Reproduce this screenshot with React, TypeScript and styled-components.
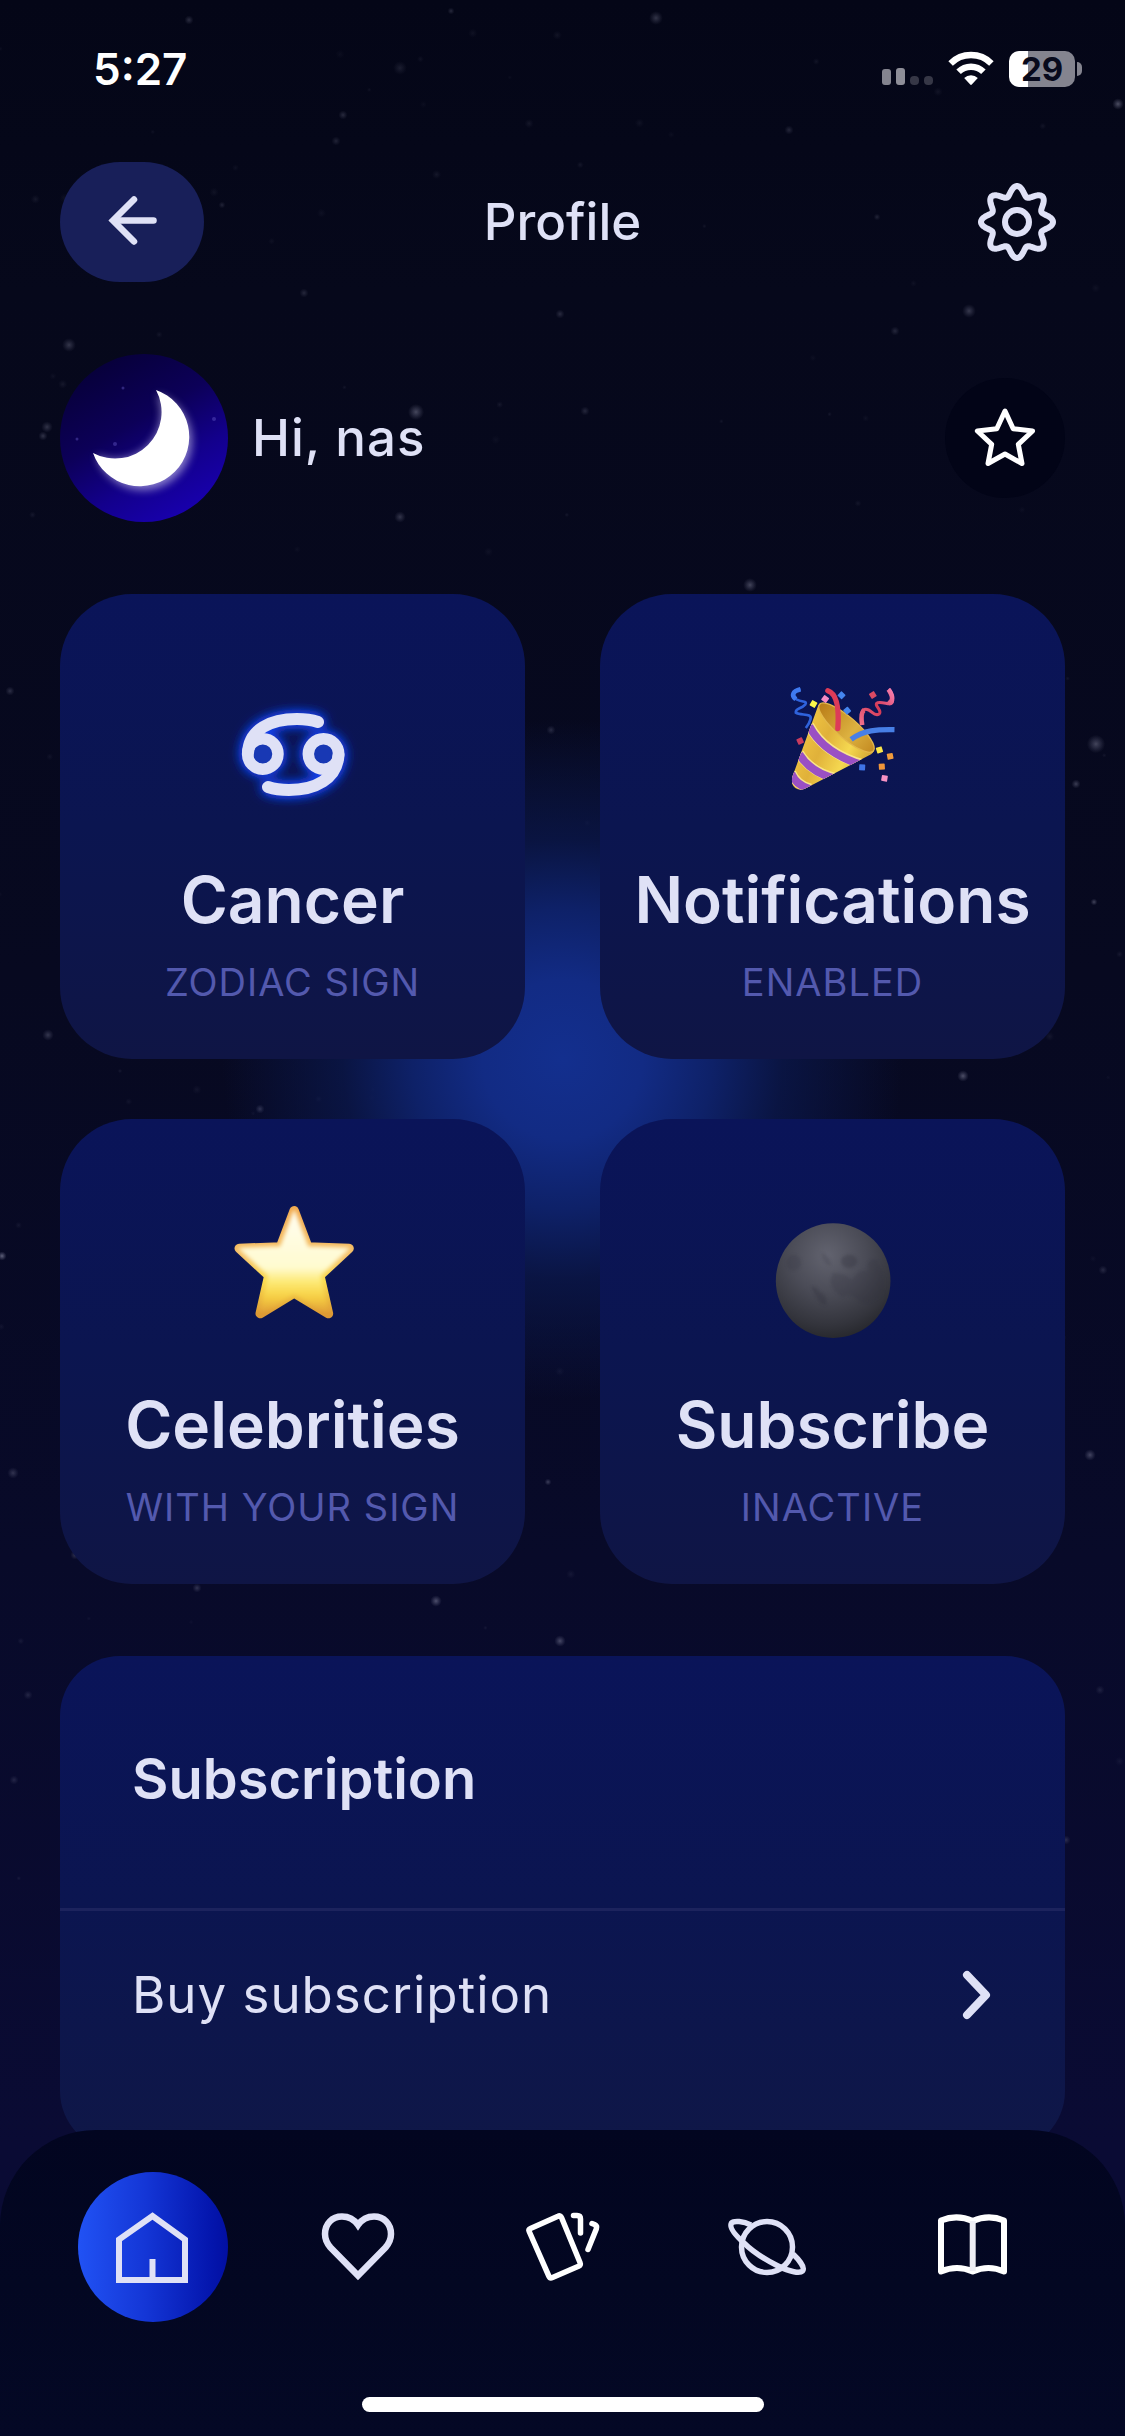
import React from "react";
import styled, { createGlobalStyle } from "styled-components";

const color = {
  text: "#dfe1f6",
  muted: "#5359ae",
  night: "#050718",
};

const GlobalStyle = createGlobalStyle`
  *, *::before, *::after { box-sizing: border-box; }
  body {
    margin: 0;
    background: ${color.night};
    color: ${color.text};
    font-family: Inter, "Liberation Sans", sans-serif;
  }
  button {
    border: 0;
    padding: 0;
    background: none;
    color: inherit;
    font: inherit;
    cursor: pointer;
  }
  h1, h2, p { margin: 0; }
  svg { display: block; }
`;

const Page = styled.div`
  position: relative;
  min-height: 100vh;
  overflow: hidden;
  background: linear-gradient(180deg, #040617 0%, #06081b 12%, #070920 40%, #080a29 64%, #0a0b34 88%);
`;

const Sky = styled.svg`
  position: absolute;
  inset: 0;
  width: 100%;
  height: 100%;
`;

const StatusBar = styled.div`
  position: relative;
  display: flex;
  justify-content: space-between;
  align-items: center;
  height: 138px;
  padding: 0 43px 0 93px;
`;

const Clock = styled.time`
  color: #fff;
  font-size: 44px;
  line-height: 54px;
  font-weight: 600;
`;

const StatusIcons = styled.div`
  display: flex;
  align-items: center;
  gap: 15px;
`;

const Battery = styled.div`
  display: flex;
  align-items: center;
  gap: 2px;
`;

const BatteryBody = styled.div<{ $level: number }>`
  width: 66px;
  height: 36px;
  border-radius: 10px;
  background: linear-gradient(90deg, #fff ${(p) => p.$level}%, #84848f ${(p) => p.$level}%);
  color: #080a1c;
  font-size: 33px;
  line-height: 36px;
  font-weight: 700;
  text-align: center;
`;

const BatteryNub = styled.div`
  width: 5px;
  height: 14px;
  border-radius: 0 6px 6px 0;
  background: #84848f;
`;

const Main = styled.main`
  position: relative;
  display: flex;
  flex-direction: column;
  gap: 72px;
  padding: 24px 60px 285px;
`;

const Header = styled.header`
  display: grid;
  grid-template-columns: 144px 1fr 144px;
  align-items: center;
`;

const Title = styled.h1`
  font-size: 51px;
  line-height: 60px;
  font-weight: 500;
  text-align: center;
`;

const BackButton = styled.button`
  display: grid;
  place-items: center;
  height: 120px;
  border-radius: 60px;
  background: #181f59;
`;

const SettingsButton = styled.button`
  justify-self: end;
`;

const Profile = styled.section`
  display: flex;
  align-items: center;
  gap: 24px;
`;

const Avatar = styled.div`
  width: 168px;
  height: 168px;
  border-radius: 50%;
  overflow: hidden;
  background: linear-gradient(150deg, #07003a 12%, #0c0058 42%, #13008c 66%, #1900b4 92%);
`;

const Greeting = styled.p`
  flex: 1;
  font-size: 51px;
  line-height: 60px;
  font-weight: 500;
  letter-spacing: 1px;
`;

const FavouriteButton = styled.button`
  display: grid;
  place-items: center;
  width: 120px;
  height: 120px;
  border-radius: 50%;
  background: #020417;
`;

const Tiles = styled.section`
  display: grid;
  grid-template-columns: 1fr 1fr;
  gap: 60px 75px;
  background: radial-gradient(circle at 50% 47%, #132f8e 0, #122b84 80px, #0e2168 150px, rgba(11, 25, 80, 0.7) 220px, rgba(9, 18, 60, 0) 340px);
`;

const Tile = styled.button`
  display: flex;
  flex-direction: column;
  align-items: center;
  aspect-ratio: 1;
  padding-top: 72px;
  border-radius: 72px;
  background: linear-gradient(180deg, #0a1459 0%, #0b1550 50%, #0f1545 100%);
`;

const TileTitle = styled.span`
  margin-top: 52px;
  font-size: 64px;
  line-height: 76px;
  font-weight: 600;
`;

const TileLabel = styled.span`
  margin-top: 20px;
  color: ${color.muted};
  font-size: 38px;
  line-height: 48px;
  letter-spacing: 1px;
  text-transform: uppercase;
`;

const Panel = styled.section`
  padding-bottom: 72px;
  border-radius: 60px;
  background: linear-gradient(180deg, #0a1459 0%, #0b1550 50%, #0f1747 100%);
`;

const PanelTitle = styled.h2`
  padding: 88px 72px 94px;
  border-bottom: 3px solid #1c235d;
  font-size: 56px;
  line-height: 70px;
  font-weight: 600;
`;

const PanelRow = styled.button`
  display: flex;
  justify-content: space-between;
  align-items: center;
  width: 100%;
  height: 168px;
  padding: 0 72px;
  font-size: 51px;
  line-height: 60px;
  letter-spacing: 1px;
`;

const BottomBar = styled.footer`
  position: fixed;
  left: 0;
  right: 0;
  bottom: 0;
  display: flex;
  flex-direction: column;
  align-items: center;
  gap: 75px;
  padding: 42px 78px 24px;
  border-radius: 96px 96px 0 0;
  background: linear-gradient(180deg, #020520 0%, #030722 50%, #040825 100%);
`;

const NavList = styled.nav`
  display: flex;
  justify-content: space-between;
  width: 100%;
`;

const NavLink = styled.a<{ $active?: boolean }>`
  display: grid;
  place-items: center;
  width: 150px;
  height: 150px;
  border-radius: 50%;
  background: ${(p) =>
    p.$active ? "linear-gradient(90deg, #2152f4 0%, #1436d6 45%, #0416ae 88%, #020fa2 100%)" : "none"};
`;

const HomeIndicator = styled.div`
  width: 402px;
  height: 15px;
  border-radius: 8px;
  background: #fff;
`;

/* x, y, radius, opacity of the stars that stand out */
const brightStars = [
  [189, 20, 4, 0.22], [656, 18, 6, 0.26], [400, 68, 6, 0.13], [1118, 104, 5, 0.4],
  [343, 115, 4, 0.2], [789, 130, 4, 0.18], [336, 141, 4, 0.16], [969, 311, 6, 0.28],
  [69, 345, 6, 0.26], [416, 412, 7, 0.36], [400, 517, 5, 0.26], [304, 293, 4, 0.18],
  [560, 314, 4, 0.2], [895, 331, 4, 0.18], [47, 427, 5, 0.24], [43, 436, 4, 0.24],
  [877, 217, 3, 0.16], [222, 205, 3, 0.16], [585, 411, 4, 0.18], [451, 11, 3, 0.2],
  [1096, 744, 8, 0.34], [1094, 902, 3, 0.34], [963, 1076, 5, 0.4], [1076, 784, 4, 0.3],
  [48, 1035, 5, 0.26], [260, 1109, 4, 0.28], [635, 1118, 7, 0.34], [1090, 1455, 5, 0.34],
  [436, 1601, 5, 0.4], [750, 585, 6, 0.34], [2, 1256, 4, 0.5], [548, 1482, 3, 0.3],
  [75, 1555, 4, 0.24], [197, 1588, 4, 0.24], [13, 1473, 5, 0.24], [10, 691, 4, 0.22],
  [551, 730, 4, 0.2], [1103, 1270, 4, 0.18], [560, 1641, 5, 0.36], [14, 1780, 4, 0.16],
  [28, 1695, 4, 0.16], [1066, 1840, 4, 0.2], [1100, 1690, 4, 0.14], [240, 795, 3, 0.2],
];

const dust = Array.from({ length: 170 }, (_, i) => {
  const a = Math.sin(i * 12.9898) * 43758.5453;
  const b = Math.sin(i * 78.233 + 4) * 24634.6345;
  const fx = a - Math.floor(a);
  const fy = b - Math.floor(b);
  return [fx * 1125, fy * 2000, 2 + ((i * 7) % 3), 0.04 + ((i * 3) % 5) * 0.012];
});

function NightSky() {
  return (
    <Sky viewBox="0 0 1125 2436" preserveAspectRatio="xMidYMin slice" aria-hidden="true">
      <defs>
        <radialGradient id="starlight">
          <stop offset="0" stopColor="#b9bad2" />
          <stop offset="0.45" stopColor="#9a9bb8" stopOpacity="0.6" />
          <stop offset="1" stopColor="#80829c" stopOpacity="0" />
        </radialGradient>
      </defs>
      {[...dust, ...brightStars].map(([x, y, r, o], i) => (
        <circle key={i} cx={x} cy={y} r={r * 1.15} opacity={o} fill="url(#starlight)" />
      ))}
    </Sky>
  );
}

function SignalIcon() {
  return (
    <svg width="51" height="36" viewBox="0 0 51 36" aria-hidden="true">
      <rect x="0" y="18" width="9" height="16" rx="3" fill="#84848f" />
      <rect x="14" y="17" width="9" height="17" rx="3" fill="#8e8e98" />
      <rect x="28" y="25" width="9" height="9" rx="4" fill="#363746" />
      <rect x="42" y="25" width="9" height="9" rx="4" fill="#363746" />
    </svg>
  );
}

function WifiIcon() {
  return (
    <svg width="46" height="36" viewBox="0 0 46 36" aria-hidden="true">
      <g fill="none" stroke="#fff" strokeWidth="6.4">
        <path d="M2.6 12.4a29 29 0 0 1 40.8 0" />
        <path d="M10.6 20.8a17.6 17.6 0 0 1 24.8 0" />
      </g>
      <path d="M16.2 27a9.8 9.8 0 0 1 13.6 0l-6 6.6q-.8.8-1.6 0z" fill="#fff" />
    </svg>
  );
}

function ArrowIcon() {
  return (
    <svg width="60" height="60" viewBox="0 0 60 60" fill="none" stroke={color.text} strokeWidth="6.5" strokeLinecap="round" aria-hidden="true">
      <path d="M32 7.500L11 28.500L32 49.500" />
      <path d="M13 28.500H51.500" />
    </svg>
  );
}

const gearPath =
  Array.from({ length: 192 }, (_, i) => {
    const t = (i / 192) * Math.PI * 2;
    const r = 31.2 + 4.8 * Math.cos(8 * t);
    return `${i ? "L" : "M"}${(48 + r * Math.sin(t)).toFixed(2)} ${(48 - r * Math.cos(t)).toFixed(2)}`;
  }).join("") + "Z";

function GearIcon() {
  return (
    <svg width="96" height="96" viewBox="0 0 96 96" fill="none" stroke={color.text} strokeWidth="6" strokeLinejoin="round" aria-hidden="true">
      <path d={gearPath} />
      <circle cx="48" cy="48" r="12" />
    </svg>
  );
}

function AvatarMoon() {
  return (
    <svg width="168" height="168" viewBox="0 0 168 168" aria-hidden="true">
      <defs>
        <filter id="moonGlow" x="-30%" y="-30%" width="160%" height="160%">
          <feGaussianBlur stdDeviation="4" />
        </filter>
      </defs>
      <path d="M97 40A49 49 0 1 1 36 101A46 46 0 0 0 97 40Z" fill="#c9c2ea" opacity=".65" filter="url(#moonGlow)" />
      <path d="M96 36A49.500 49.500 0 1 1 33 99A46.500 46.500 0 0 0 96 36Z" fill="#fff" />
      <g fill="#6d5fd0" opacity=".4">
        <circle cx="63" cy="34" r="1.500" />
        <circle cx="55" cy="90" r="2" />
        <circle cx="154" cy="65" r="2" />
        <circle cx="17" cy="85" r="1.500" />
      </g>
    </svg>
  );
}

function OutlineStar() {
  const points = Array.from({ length: 10 }, (_, i) => {
    const r = i % 2 ? 14 : 29;
    const t = (i * Math.PI) / 5;
    return `${(36 + r * Math.sin(t)).toFixed(1)},${(38 - r * Math.cos(t)).toFixed(1)}`;
  }).join(" ");
  return (
    <svg width="72" height="72" viewBox="0 0 72 72" fill="none" stroke="#fff" strokeWidth="5" strokeLinejoin="round" aria-hidden="true">
      <polygon points={points} />
    </svg>
  );
}

const TileIcon = styled.svg.attrs({ width: 144, height: 144, viewBox: "0 0 144 144", "aria-hidden": true })`
  overflow: visible;
`;

function CancerIcon() {
  return (
    <TileIcon>
      <defs>
        <filter id="signGlow" x="-40%" y="-40%" width="180%" height="180%">
          <feGaussianBlur stdDeviation="6" />
        </filter>
        <g id="cancerSign" fill="none" strokeLinecap="round">
          <g strokeWidth="11.5">
            <circle cx="41.800" cy="88" r="15.200" />
            <circle cx="102.500" cy="88" r="15.200" />
          </g>
          <g strokeWidth="12">
            <path d="M27 87C28 63 50 53 76 53C84 53 91 54 97 56" />
            <path d="M117.500 89C116 113 94 124 68 124C60 124 53 123 47 121" />
          </g>
        </g>
      </defs>
      <use href="#cancerSign" stroke="#1747ff" filter="url(#signGlow)" />
      <use href="#cancerSign" stroke="#1440ea" filter="url(#signGlow)" />
      <circle cx="41.800" cy="88" r="12" fill="#1838b4" />
      <circle cx="102.500" cy="88" r="12" fill="#1838b4" />
      <use href="#cancerSign" stroke={color.text} />
    </TileIcon>
  );
}

const confetti: [number, number, string][] = [
  [159, 102, "#fbf84a"], [194, 87, "#f58ac4"], [243, 76, "#4585ee"], [260, 122, "#4585ee"],
  [337, 75, "#dc4a64"], [119, 213, "#c93b5e"], [357, 240, "#fbe74a"], [389, 259, "#f09c3c"],
  [364, 290, "#f0963a"], [305, 292, "#3f74e6"], [372, 325, "#f792c4"],
];

function PartyIcon() {
  return (
    <TileIcon>
      <defs>
        <linearGradient id="cone" x1="0" y1=".4" x2="1" y2=".9">
          <stop offset="0" stopColor="#f6cc45" />
          <stop offset=".35" stopColor="#e0b13a" />
          <stop offset=".6" stopColor="#f5d850" />
          <stop offset="1" stopColor="#b9821d" />
        </linearGradient>
        <linearGradient id="mouth" x1="0" y1="0" x2="1" y2="0">
          <stop offset="0" stopColor="#b97c17" />
          <stop offset=".6" stopColor="#dcb140" />
          <stop offset="1" stopColor="#c48b22" />
        </linearGradient>
        <linearGradient id="redRibbon" x1="0" y1="1" x2="1" y2="0">
          <stop offset="0" stopColor="#f0708c" />
          <stop offset=".5" stopColor="#d53a56" />
          <stop offset="1" stopColor="#f77fb0" />
        </linearGradient>
        <clipPath id="coneShape">
          <path d="M174 104L95 322Q90 350 112 358Q124 362 136 355L326 256Q344 246 338 238Q300 232 250 196Q190 150 174 104Z" />
        </clipPath>
      </defs>
      <g transform="translate(-.5 4) scale(.3333)">
        <g clipPath="url(#coneShape)">
          <rect x="80" y="90" width="270" height="280" fill="url(#cone)" />
          <g fill="none" stroke="#f9e58a" strokeWidth="30">
            <path d="M146 166Q190 250 310 284" />
            <path d="M116 250Q150 306 225 324" />
            <path d="M92 308Q108 345 150 356" />
          </g>
          <g fill="none" stroke="#9a50c4" strokeWidth="24">
            <path d="M146 168Q190 252 310 286" />
            <path d="M116 252Q150 308 225 326" />
            <path d="M92 310Q108 347 150 358" />
          </g>
        </g>
        <ellipse cx="258" cy="173" rx="107" ry="31" transform="rotate(41 258 173)" fill="url(#mouth)" stroke="#e3b84a" strokeWidth="4" />
        <path d="M202 62C232 72 236 120 232 176" fill="none" stroke="#dd3b58" strokeWidth="16" strokeLinecap="round" />
        <path d="M272 208C310 180 350 178 402 179" fill="none" stroke="#477fe6" strokeWidth="16" />
        <path d="M120 58C96 64 90 78 108 88C128 98 142 92 134 104C122 118 104 114 106 128C120 138 156 128 150 148Q146 162 136 174" fill="none" stroke="#2f63dc" strokeWidth="8" />
        <path d="M120 58C96 64 92 76 106 88" fill="none" stroke="#3f7af0" strokeWidth="14" />
        <path d="M305 165C300 130 304 118 316 118C334 118 340 142 356 132C368 122 336 104 352 98C374 94 400 114 396 86Q394 64 384 58" fill="none" stroke="url(#redRibbon)" strokeWidth="9" />
        <path d="M305 165C301 140 302 126 311 120M384 58Q406 90 384 100" fill="none" stroke="url(#redRibbon)" strokeWidth="14" />
        {confetti.map(([x, y, fill], i) => (
          <rect key={i} x={x - 9} y={y - 9} width="18" height="18" rx="2" fill={fill} transform={`rotate(${30 + i * 7} ${x} ${y})`} />
        ))}
      </g>
    </TileIcon>
  );
}

const goldStar = "M251 62L292 171L416 175L328 257L354 371L251 309L149 371L175 257L86 175L210 171Z";

function GoldStarIcon() {
  return (
    <TileIcon>
      <defs>
        <linearGradient id="gold" x1="0" y1="0" x2="0" y2="1">
          <stop offset="0" stopColor="#f1a94c" />
          <stop offset=".45" stopColor="#f4c066" />
          <stop offset=".68" stopColor="#fbdc4c" />
          <stop offset="1" stopColor="#dd9a35" />
        </linearGradient>
        <linearGradient id="shine" x1="0" y1="0" x2="0" y2="1">
          <stop offset="0" stopColor="#fffdf0" />
          <stop offset=".55" stopColor="#fffbd0" />
          <stop offset=".68" stopColor="#fdeb7c" />
          <stop offset=".85" stopColor="#fbd843" stopOpacity=".6" />
          <stop offset="1" stopColor="#f3bd3a" stopOpacity="0" />
        </linearGradient>
        <filter id="soften">
          <feGaussianBlur stdDeviation="7" />
        </filter>
      </defs>
      <g transform="translate(-10.500 -1) scale(.3333)">
        <path d={goldStar} fill="url(#gold)" stroke="url(#gold)" strokeWidth="28" strokeLinejoin="round" />
        <path d={goldStar} fill="url(#shine)" stroke="url(#shine)" strokeWidth="4" strokeLinejoin="round" filter="url(#soften)" />
      </g>
    </TileIcon>
  );
}

function NewMoonIcon() {
  return (
    <TileIcon>
      <defs>
        <radialGradient id="moonBody" cx=".45" cy=".28" r=".75">
          <stop offset="0" stopColor="#62636f" />
          <stop offset=".45" stopColor="#4a4b56" />
          <stop offset=".8" stopColor="#34353d" />
          <stop offset="1" stopColor="#25262b" />
        </radialGradient>
        <filter id="craterBlur">
          <feGaussianBlur stdDeviation="5" />
        </filter>
      </defs>
      <g transform="translate(-10.500 9) scale(.3333)">
        <circle cx="248" cy="242" r="172" fill="url(#moonBody)" />
        <g fill="#2e2f3a" opacity=".32" filter="url(#craterBlur)">
          <path d="M182 258Q200 262 208 276Q234 286 226 316Q204 310 194 286Z" />
          <path d="M248 218Q290 222 304 240Q330 204 352 214Q346 170 378 180Q408 220 398 280Q350 330 310 290Q290 280 276 292Q240 270 240 240Z" opacity=".7" />
          <ellipse cx="296" cy="184" rx="24" ry="20" />
          <ellipse cx="130" cy="188" rx="22" ry="24" opacity=".6" />
          <path d="M212 160Q236 160 242 196Q220 200 212 160Z" opacity=".6" />
        </g>
      </g>
    </TileIcon>
  );
}

const NavIcon = styled.svg.attrs({ width: 96, height: 96, viewBox: "0 0 96 96", fill: "none", "aria-hidden": true })``;

const HomeIcon = () => (
  <NavIcon stroke={color.text} strokeWidth="6">
    <path d="M47.500 17L80 40.500V81H14V40.500ZM47.500 60V81" />
  </NavIcon>
);

const HeartIcon = () => (
  <NavIcon stroke={color.text} strokeWidth="6.500">
    <path d="M48 26C43.500 19.500 38 17.500 32 17.500C22 17.500 15 25 15 35C15 41 17 44.500 20.500 48.500L48 76.500L75.500 48.500C79 44.500 81 41 81 35C81 25 74 17.500 64 17.500C58 17.500 52.500 19.500 48 26Z" />
  </NavIcon>
);

const CardsIcon = () => (
  <NavIcon stroke="#fff" strokeWidth="5.500" strokeLinecap="round" strokeLinejoin="round">
    <path d="M15.500 29.500L43 17.200Q45.500 16 46.600 18.700L65 63.500Q66 66 63.500 67.300L37.500 78.500Q35 79.600 33.800 77L14.200 32.500Q13.300 30.500 15.500 29.500Z" />
    <path d="M58.500 16.500H62Q65.500 16.500 65.500 20V34" />
    <path d="M77 24.500L79.500 25.500Q82.500 27 81.300 30L73 50.500" />
  </NavIcon>
);

const PlanetIcon = () => (
  <NavIcon stroke={color.text} strokeWidth="5.500" strokeLinejoin="round">
    <circle cx="48" cy="48" r="25.500" />
    <path d="M32 26C24 22 15 21.500 12.500 24C10 28 15 35 25 44C35 54 47 61 59 67C71 73 81 74.500 83.500 72C86 69 81.500 62 74 55" />
  </NavIcon>
);

const BookIcon = () => (
  <NavIcon stroke="#fff" strokeWidth="6" strokeLinejoin="round">
    <path d="M17 21.500Q33 15 48.700 22Q64.500 15 80 21.500V72.500Q64.500 65.500 48.700 72.500Q33 65.500 17 72.500Z" />
    <path d="M48.700 22V72" stroke="#eeeef4" />
  </NavIcon>
);

const tiles = [
  { title: "Cancer", label: "Zodiac sign", Icon: CancerIcon },
  { title: "Notifications", label: "Enabled", Icon: PartyIcon },
  { title: "Celebrities", label: "With your sign", Icon: GoldStarIcon },
  { title: "Subscribe", label: "Inactive", Icon: NewMoonIcon },
];

const sections = [
  { name: "Home", Icon: HomeIcon },
  { name: "Compatibility", Icon: HeartIcon },
  { name: "Tarot", Icon: CardsIcon },
  { name: "Planets", Icon: PlanetIcon },
  { name: "Learn", Icon: BookIcon },
];

export default function App() {
  return (
    <Page>
      <GlobalStyle />
      <NightSky />
      <StatusBar>
        <Clock>5:27</Clock>
        <StatusIcons>
          <SignalIcon />
          <WifiIcon />
          <Battery>
            <BatteryBody $level={29}>29</BatteryBody>
            <BatteryNub />
          </Battery>
        </StatusIcons>
      </StatusBar>

      <Main>
        <Header>
          <BackButton aria-label="Back">
            <ArrowIcon />
          </BackButton>
          <Title>Profile</Title>
          <SettingsButton aria-label="Settings">
            <GearIcon />
          </SettingsButton>
        </Header>

        <Profile>
          <Avatar>
            <AvatarMoon />
          </Avatar>
          <Greeting>Hi, nas</Greeting>
          <FavouriteButton aria-label="Favourites">
            <OutlineStar />
          </FavouriteButton>
        </Profile>

        <Tiles>
          {tiles.map(({ title, label, Icon }) => (
            <Tile key={title}>
              <Icon />
              <TileTitle>{title}</TileTitle>
              <TileLabel>{label}</TileLabel>
            </Tile>
          ))}
        </Tiles>

        <Panel>
          <PanelTitle>Subscription</PanelTitle>
          <PanelRow>
            Buy subscription
            <svg width="36" height="60" viewBox="0 0 36 60" fill="none" stroke={color.text} strokeWidth="8" strokeLinecap="round" strokeLinejoin="round" aria-hidden="true">
              <path d="M10 10L29 30L10 50" />
            </svg>
          </PanelRow>
        </Panel>
      </Main>

      <BottomBar>
        <NavList aria-label="Sections">
          {sections.map(({ name, Icon }, i) => (
            <NavLink key={name} href={`#${name.toLowerCase()}`} aria-label={name} $active={i === 0}>
              <Icon />
            </NavLink>
          ))}
        </NavList>
        <HomeIndicator />
      </BottomBar>
    </Page>
  );
}
